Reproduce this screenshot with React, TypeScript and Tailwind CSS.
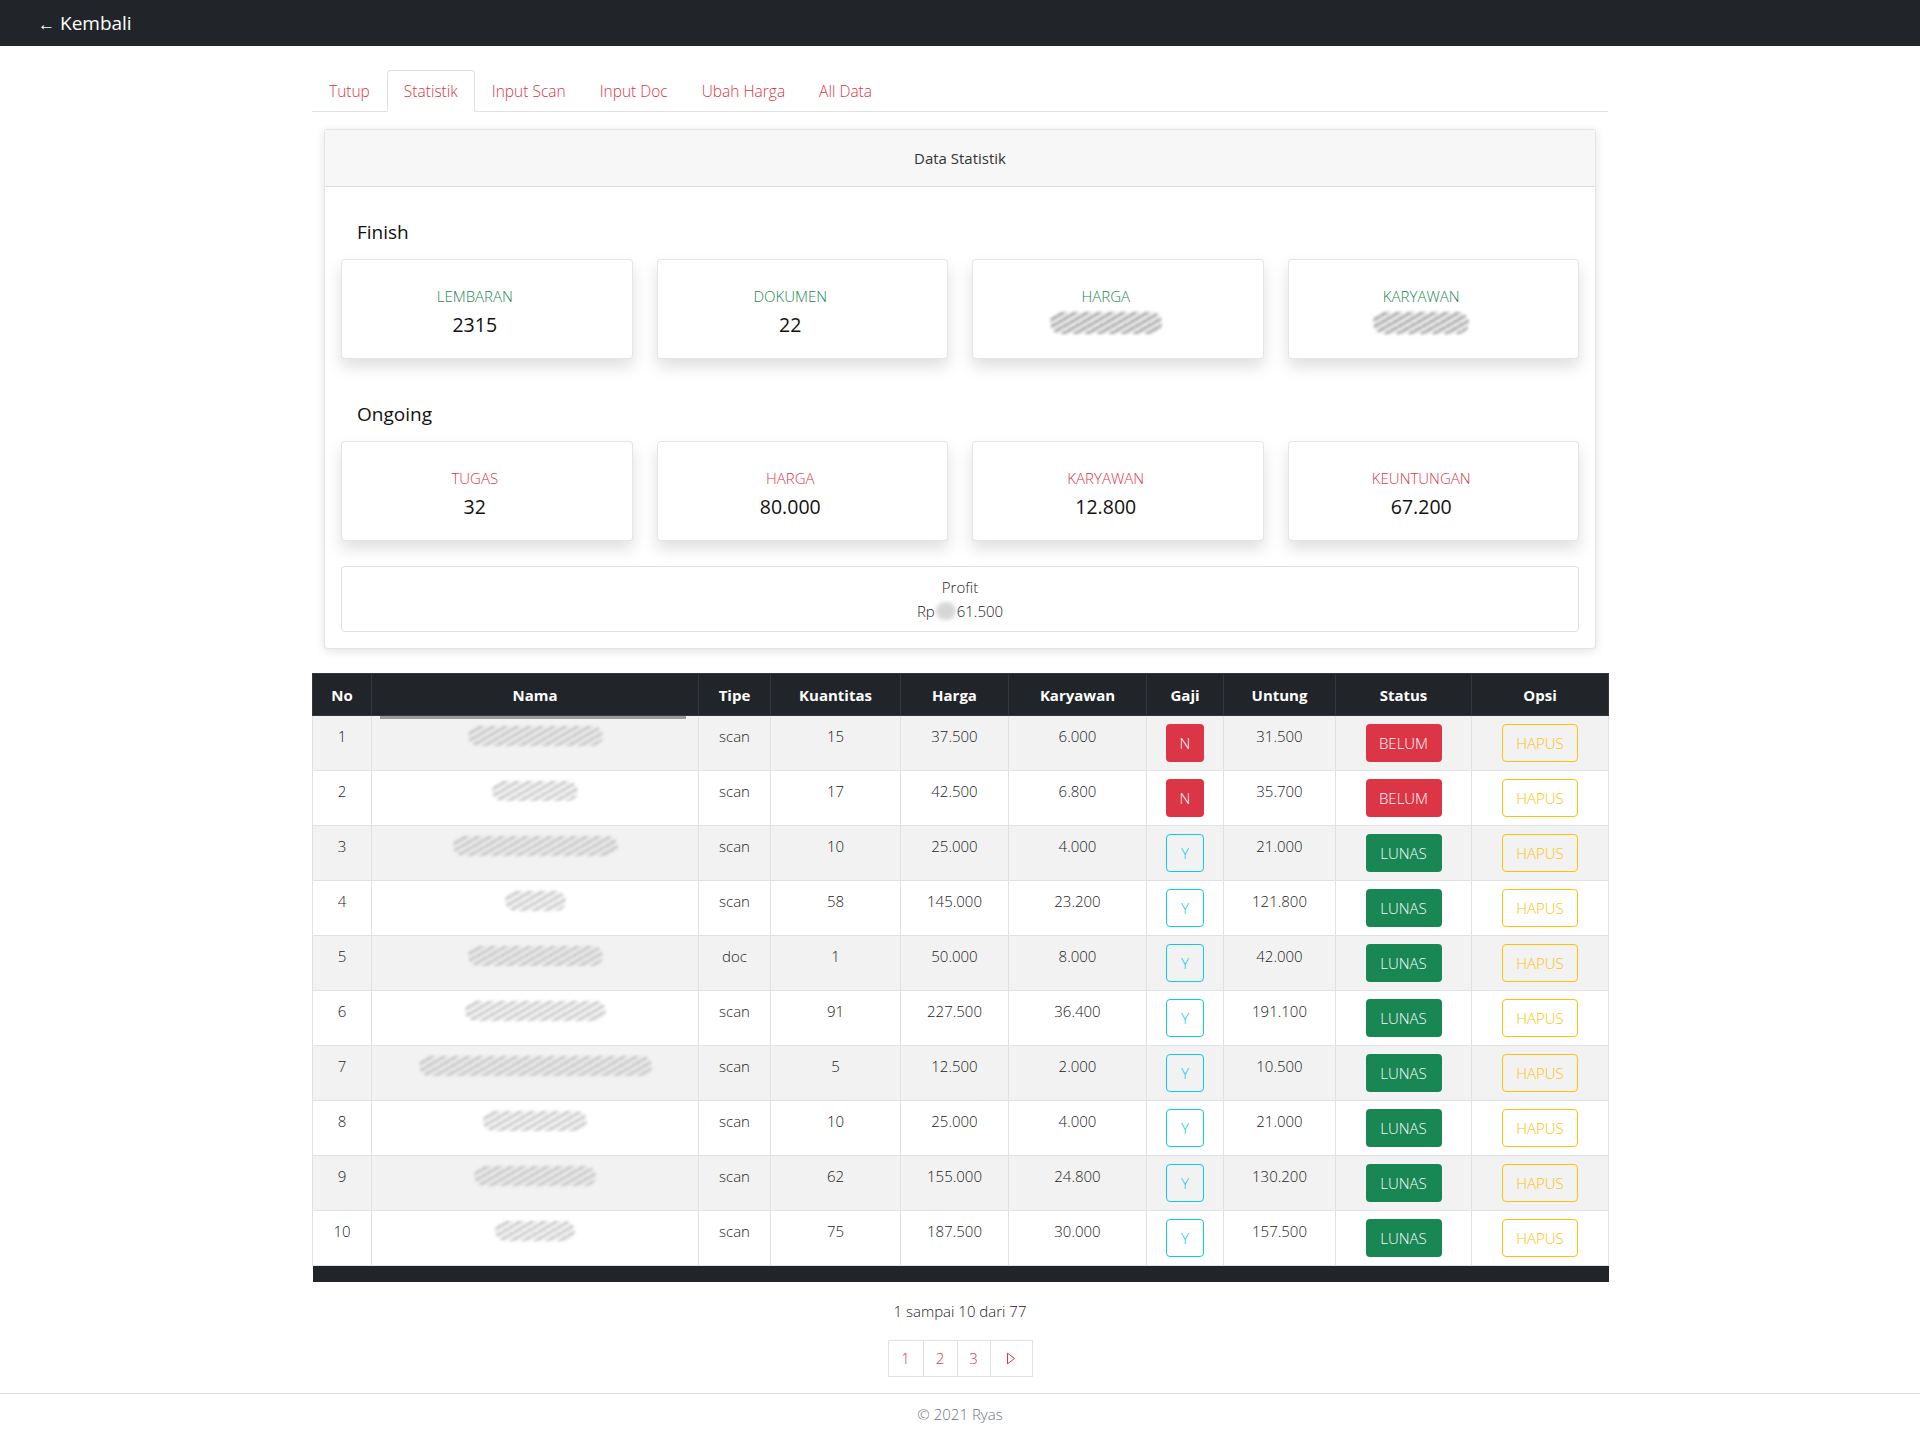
import React from "react";

type Row = {
  no: number;
  w: number;
  tipe: string;
  q: string;
  harga: string;
  kary: string;
  gaji: "N" | "Y";
  untung: string;
};

const rows: Row[] = [
  { no: 1, w: 135, tipe: "scan", q: "15", harga: "37.500", kary: "6.000", gaji: "N", untung: "31.500" },
  { no: 2, w: 86, tipe: "scan", q: "17", harga: "42.500", kary: "6.800", gaji: "N", untung: "35.700" },
  { no: 3, w: 165, tipe: "scan", q: "10", harga: "25.000", kary: "4.000", gaji: "Y", untung: "21.000" },
  { no: 4, w: 61, tipe: "scan", q: "58", harga: "145.000", kary: "23.200", gaji: "Y", untung: "121.800" },
  { no: 5, w: 135, tipe: "doc", q: "1", harga: "50.000", kary: "8.000", gaji: "Y", untung: "42.000" },
  { no: 6, w: 141, tipe: "scan", q: "91", harga: "227.500", kary: "36.400", gaji: "Y", untung: "191.100" },
  { no: 7, w: 233, tipe: "scan", q: "5", harga: "12.500", kary: "2.000", gaji: "Y", untung: "10.500" },
  { no: 8, w: 104, tipe: "scan", q: "10", harga: "25.000", kary: "4.000", gaji: "Y", untung: "21.000" },
  { no: 9, w: 122, tipe: "scan", q: "62", harga: "155.000", kary: "24.800", gaji: "Y", untung: "130.200" },
  { no: 10, w: 80, tipe: "scan", q: "75", harga: "187.500", kary: "30.000", gaji: "Y", untung: "157.500" },
];

function Smudge({ w, h = 18, dark = false }: { w: number; h?: number; dark?: boolean }) {
  return (
    <div
      className={
        "mx-auto rounded-full blur-[1.6px] " +
        (dark
          ? "bg-[repeating-linear-gradient(150deg,#7e7e7e_0_2px,#cfcfcf_2px_4px,transparent_4px_6px)] opacity-80"
          : "bg-[repeating-linear-gradient(150deg,#ababab_0_2px,#dedede_2px_4px,transparent_4px_6px)] opacity-75")
      }
      style={{ width: w, height: h }}
    />
  );
}

function StatCard({ label, value, color, blur }: { label: string; value?: string; color: string; blur?: number }) {
  return (
    <div className="h-[100px] bg-white border border-[rgba(0,0,0,0.1)] rounded-[4px] shadow-[0_0.5rem_1rem_rgba(0,0,0,0.13)] flex flex-col items-center pt-[24px] pr-[24px]">
      <div className={"text-[15px] leading-6 font-light uppercase " + color}>{label}</div>
      {blur ? (
        <div className="mt-[4px]">
          <Smudge w={blur} h={22} dark />
        </div>
      ) : (
        <div className="text-[19.5px] leading-[30px] font-medium text-[#111] mt-[2px]">{value}</div>
      )}
    </div>
  );
}

export default function App() {
  const headers = ["No", "Nama", "Tipe", "Kuantitas", "Harga", "Karyawan", "Gaji", "Untung", "Status", "Opsi"];
  const widths = [59, 327, 72, 130, 108, 138, 77, 112, 136, 137];
  const tabs = ["Tutup", "Statistik", "Input Scan", "Input Doc", "Ubah Harga", "All Data"];

  return (
    <div className="min-h-[1435px] flex flex-col bg-white text-[#212529] font-['Open_Sans','Noto_Sans',sans-serif]">
      <nav className="h-[46px] bg-[#212529] flex items-center pl-[38px] shrink-0">
        <span className="text-white text-[17px] font-bold mr-[5px] leading-none">←</span>
        <span className="text-white text-[19px] font-medium leading-none">Kembali</span>
      </nav>

      <main className="w-[1296px] mx-auto">
        <div className="mt-[24px] flex border-b border-[#dee2e6]">
          {tabs.map((t) => (
            <div
              key={t}
              className={
                "px-4 py-2 text-[15.5px] leading-6 font-light text-[#dc3545] border rounded-t-[4px] -mb-px " +
                (t === "Statistik" ? "border-[#dee2e6] border-b-white bg-white" : "border-transparent")
              }
            >
              {t}
            </div>
          ))}
        </div>

        <div className="mx-[12px] mt-[17px] border border-[rgba(0,0,0,0.1)] rounded-[4px] shadow-[0_0.125rem_0.6rem_rgba(0,0,0,0.12)] bg-white">
          <div className="bg-[#f7f7f7] border-b border-[rgba(0,0,0,0.1)] py-4 text-center text-[15px] leading-6 text-[#333]">
            Data Statistik
          </div>
          <div className="p-4">
            <h5 className="pl-4 mt-[17px] text-[19px] leading-6 font-medium text-[#111]">Finish</h5>
            <div className="grid grid-cols-4 gap-6 mt-[15px]">
              <StatCard label="Lembaran" value="2315" color="text-[#198754]" />
              <StatCard label="Dokumen" value="22" color="text-[#198754]" />
              <StatCard label="Harga" color="text-[#198754]" blur={112} />
              <StatCard label="Karyawan" color="text-[#198754]" blur={96} />
            </div>
            <h5 className="pl-4 mt-[43px] text-[19px] leading-6 font-medium text-[#111]">Ongoing</h5>
            <div className="grid grid-cols-4 gap-6 mt-[15px]">
              <StatCard label="Tugas" value="32" color="text-[#dc3545]" />
              <StatCard label="Harga" value="80.000" color="text-[#dc3545]" />
              <StatCard label="Karyawan" value="12.800" color="text-[#dc3545]" />
              <StatCard label="Keuntungan" value="67.200" color="text-[#dc3545]" />
            </div>
            <div className="mt-[25px] border border-[rgba(0,0,0,0.12)] rounded-[4px] h-[66px] flex flex-col items-center justify-center text-[15px] leading-6 font-light text-[#222]">
              <div>Profit</div>
              <div className="flex items-center">
                <span>Rp</span>
                <span className="inline-block w-[20px] h-[18px] mx-[1px] rounded-full bg-[#d6d6d6] blur-[2px]" />
                <span>61.500</span>
              </div>
            </div>
          </div>
        </div>

        <table className="mt-[24px] w-[1296px] table-fixed border-collapse text-[15px]">
          <colgroup>
            {widths.map((w, i) => (
              <col key={i} style={{ width: w }} />
            ))}
          </colgroup>
          <thead>
            <tr className="bg-[#212529]">
              {headers.map((h) => (
                <th key={h} className="h-[42px] px-2 text-center text-white font-bold border border-[#32383e] leading-6">
                  {h}
                </th>
              ))}
            </tr>
          </thead>
          <tbody>
            {rows.map((r, i) => {
              const odd = i % 2 === 0;
              const td = "border border-[#dee2e6] px-2 py-2 align-top text-center font-light leading-6 text-[#222]";
              return (
                <tr key={r.no} className={odd ? "bg-[#f2f2f2]" : "bg-white"}>
                  <td className={td}>{r.no}</td>
                  <td className={td + " relative"}>
                    {r.no === 1 && <div className="absolute left-[8px] right-[12px] top-0 h-[3px] bg-[#9a9a9a] blur-[0.5px]" />}
                    <div className="mt-[2px]">
                      <Smudge w={r.w} h={20} />
                    </div>
                  </td>
                  <td className={td}>{r.tipe}</td>
                  <td className={td}>{r.q}</td>
                  <td className={td}>{r.harga}</td>
                  <td className={td}>{r.kary}</td>
                  <td className={td}>
                    {r.gaji === "N" ? (
                      <div className="mx-auto w-[38px] h-[38px] rounded-[4px] bg-[#dc3545] text-white flex items-center justify-center font-light">N</div>
                    ) : (
                      <div className="mx-auto w-[38px] h-[38px] rounded-[4px] border border-[#0dcaf0] text-[#0dcaf0] flex items-center justify-center font-light">Y</div>
                    )}
                  </td>
                  <td className={td}>{r.untung}</td>
                  <td className={td}>
                    {r.gaji === "N" ? (
                      <div className="mx-auto w-[76px] h-[38px] rounded-[4px] bg-[#dc3545] text-white flex items-center justify-center font-light">BELUM</div>
                    ) : (
                      <div className="mx-auto w-[76px] h-[38px] rounded-[4px] bg-[#198754] text-white flex items-center justify-center font-light">LUNAS</div>
                    )}
                  </td>
                  <td className={td}>
                    <div className="mx-auto w-[76px] h-[38px] rounded-[4px] border border-[#ffc107] text-[#ffc107] flex items-center justify-center font-light">HAPUS</div>
                  </td>
                </tr>
              );
            })}
            <tr>
              <td colSpan={10} className="h-[16px] bg-[#212529] p-0" />
            </tr>
          </tbody>
        </table>

        <div className="mt-[17px] text-center text-[15px] leading-6 font-light text-[#222]">1 sampai 10 dari 77</div>
        <div className="mt-[17px] flex justify-center">
          <div className="flex h-[37px] border border-[#dee2e6] text-[#dc3545] text-[15px] font-light">
            <div className="w-[34px] flex items-center justify-center">1</div>
            <div className="w-[34px] flex items-center justify-center border-l border-[#dee2e6]">2</div>
            <div className="w-[33px] flex items-center justify-center border-l border-[#dee2e6]">3</div>
            <div className="w-[42px] flex items-center justify-center border-l border-[#dee2e6]">
              <svg width="10" height="13" viewBox="0 0 10 13" fill="none">
                <path d="M1.5 1.2 L8.5 6.5 L1.5 11.8 Z" stroke="#dc3545" strokeWidth="1" strokeLinejoin="round" />
              </svg>
            </div>
          </div>
        </div>
      </main>

      <footer className="mt-auto border-t border-[#dee2e6] h-[42px] flex items-center justify-center text-[15px] font-light text-[#6c757d]">
        © 2021 Ryas
      </footer>
    </div>
  );
}
